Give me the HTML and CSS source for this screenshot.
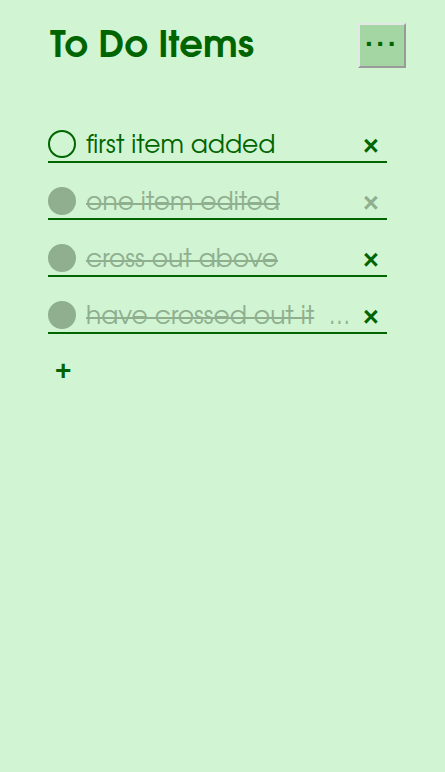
FILE: index.html
```html
<!DOCTYPE html>
<html>
<head>
<meta charset="utf-8">
<link rel="stylesheet" href="styles.css">
</head>
<body>
<div class="app">
  <header class="header">
    <h1 class="title">To Do Items</h1>
    <button class="menu-btn" aria-label="menu">&middot;&middot;&middot;</button>
  </header>
  <ul class="list">
    <li class="item">
      <span class="check"></span>
      <span class="text">first item added</span>
      <span class="del">&times;</span>
    </li>
    <li class="item done">
      <span class="check"></span>
      <span class="text"><s>one item edited</s></span>
      <span class="del faded">&times;</span>
    </li>
    <li class="item done">
      <span class="check"></span>
      <span class="text"><s>cross out above</s></span>
      <span class="del">&times;</span>
    </li>
    <li class="item done">
      <span class="check"></span>
      <span class="text"><s>have crossed out it</s><span class="ell">&hellip;</span></span>
      <span class="del">&times;</span>
    </li>
  </ul>
  <div class="add">+</div>
</div>
</body>
</html>
```
FILE: styles.css
```css
html, body {
  margin: 0;
  padding: 0;
  background: #d1f4d3;
  height: 100%;
}
body {
  font-family: "Century Gothic", "URW Gothic", "URW Gothic L", "TeX Gyre Adventor", "Liberation Sans", sans-serif;
  color: #006400;
}
.app {
  width: 339px;
  margin-left: 48px;
  padding-top: 23px;
}
.header {
  display: flex;
  justify-content: space-between;
  align-items: flex-start;
  width: 358px;
  height: 45px;
}
.title {
  margin: 4px 0 0 2px;
  font-size: 37px;
  font-weight: bold;
  line-height: 40px;
  color: #006400;
}
.menu-btn {
  width: 48px;
  height: 45px;
  background: #a3d6a3;
  border: 2px solid;
  border-color: #e6e6e6 #9a9a9a #9a9a9a #e6e6e6;
  color: #006400;
  font-size: 28px;
  font-weight: bold;
  line-height: 20px;
  padding: 0 0 4px;
  font-family: "Liberation Sans", sans-serif;
  letter-spacing: 2px;
}
.list {
  list-style: none;
  margin: 38px 0 0;
  padding: 0;
}
.item {
  display: flex;
  align-items: flex-end;
  height: 52px;
  padding-bottom: 3px;
  border-bottom: 2px solid #006400;
  box-sizing: content-box;
}
.check {
  width: 24px;
  height: 24px;
  border: 2px solid #006400;
  border-radius: 50%;
  flex: none;
}
.done .check {
  background: #8faf8f;
  border-color: #8faf8f;
}
.text {
  flex: 1;
  margin: 0 0 -3px 10px;
  font-size: 25px;
  line-height: 28px;
  white-space: nowrap;
  overflow: hidden;
}
.done .text {
  color: #8faf8f;
}
.ell {
  margin-left: 15px;
}
.del {
  width: 20px;
  margin: 0 6px -2px 0;
  font-size: 27px;
  font-weight: bold;
  line-height: 28px;
  text-align: center;
  font-family: "Liberation Sans", sans-serif;
}
.del.faded {
  color: #8faf8f;
}
.add {
  margin: 22px 0 0 7px;
  font-size: 28px;
  font-weight: bold;
  line-height: 30px;
  font-family: "Liberation Sans", sans-serif;
}
```
